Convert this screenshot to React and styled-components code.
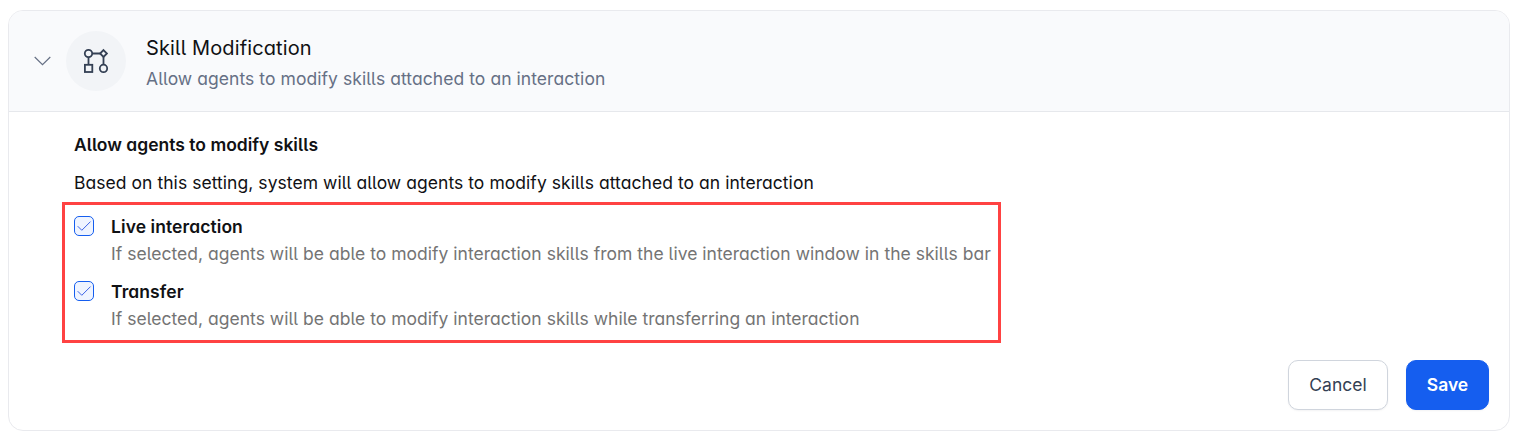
import React from "react";
import styled, { createGlobalStyle } from "styled-components";

const GlobalStyle = createGlobalStyle`
  * { box-sizing: border-box; }
  body {
    margin: 0;
    background: #fff;
    font-family: Inter, "Liberation Sans", sans-serif;
    font-feature-settings: "cv11", "cv05";
  }
`;

const Page = styled.main`
  padding: 10px 4px 0 8px;
`;

const Card = styled.section`
  width: 1502px;
  height: 421px;
  border: 1px solid #e9eaee;
  border-radius: 15px;
  background: #fff;
  overflow: hidden;
`;

const Header = styled.header`
  display: flex;
  align-items: center;
  height: 101px;
  padding-left: 25px;
  background: #f9fafc;
  border-bottom: 1px solid #e6e8ec;
`;

const Heading = styled.div`
  padding-top: 5px;
`;

const Chevron = styled.svg`
  width: 17px;
  height: 10px;
  fill: none;
  stroke: #667085;
  stroke-width: 1.2;
`;

const IconCircle = styled.div`
  display: flex;
  align-items: center;
  justify-content: center;
  width: 60px;
  height: 60px;
  margin: 0 20px 0 15px;
  border-radius: 50%;
  background: #f2f4f7;
`;

const FlowIcon = styled.svg`
  width: 26px;
  height: 26px;
  fill: none;
  stroke: #344054;
  stroke-width: 1.8;
`;

const Line = styled.div`
  font-size: ${(p) => p.$size || 17.5}px;
  line-height: ${(p) => p.$height || 28}px;
  font-weight: ${(p) => p.$weight || 370};
  letter-spacing: ${(p) => p.$track || 0}px;
  color: ${(p) => p.$color || "#101114"};
  white-space: nowrap;
`;

const Body = styled.div`
  padding: 19px 20px 0 53px;
`;

const Intro = styled.div`
  display: flex;
  flex-direction: column;
  gap: 10px;
  padding-left: 12px;
`;

const Highlight = styled.div`
  display: flex;
  flex-direction: column;
  gap: 11px;
  width: 939px;
  height: 141px;
  margin-top: 5px;
  padding: 8px 0 0 9px;
  border: 3px solid #ff4242;
`;

const Option = styled.label`
  display: flex;
  align-items: flex-start;
  gap: 17px;
`;

const Box = styled.span`
  display: flex;
  flex: none;
  width: 20px;
  height: 20px;
  margin-top: 3px;
  border: 1px solid #155eef;
  border-radius: 5px;
  background: #eff4ff;
`;

const Tick = styled.svg`
  width: 18px;
  height: 18px;
  fill: none;
  stroke: #3d63e6;
  stroke-width: 1;
`;

const Actions = styled.footer`
  display: flex;
  justify-content: flex-end;
  gap: 18px;
  margin-top: 17px;
`;

const Button = styled.button`
  width: ${(p) => (p.$primary ? 83 : 100)}px;
  height: 50px;
  padding: 0 0 2px;
  border: 1px solid ${(p) => (p.$primary ? "#155eef" : "#d0d5dd")};
  border-radius: 10px;
  background: ${(p) => (p.$primary ? "#155eef" : "#fff")};
  color: ${(p) => (p.$primary ? "#fff" : "#344054")};
  font-family: Inter, "Liberation Sans", sans-serif;
  font-feature-settings: normal;
  font-size: 17.5px;
  font-weight: ${(p) => (p.$primary ? 580 : 400)};
  box-shadow: 0 1px 2px rgba(16, 24, 40, 0.05);
`;

const options = [
  {
    title: "Live interaction",
    text: "If selected, agents will be able to modify interaction skills from the live interaction window in the skills bar",
  },
  {
    title: "Transfer",
    text: "If selected, agents will be able to modify interaction skills while transferring an interaction",
  },
];

export default function App() {
  return (
    <Page>
      <GlobalStyle />
      <Card>
        <Header>
          <Chevron viewBox="0 0 17 10">
            <path d="M0.7 1 8.5 8.6 16.3 1" />
          </Chevron>
          <IconCircle>
            <FlowIcon viewBox="0 0 26 26">
              <circle cx="5.5" cy="5.5" r="3.7" />
              <path d="M9.1 5.5h8.3M5.5 9.1v7.7M20.5 8.8v8" />
              <path d="M20.5 2.1 23.9 5.5 20.5 8.9 17.1 5.5Z" />
              <rect x="1.9" y="16.8" width="7.4" height="7.2" />
              <circle cx="20.5" cy="20.4" r="3.7" />
            </FlowIcon>
          </IconCircle>
          <Heading>
            <Line $size={20} $height={30} $weight={400} $track={0.12}>Skill Modification</Line>
            <Line $height={31} $track={0.06} $color="#667085">Allow agents to modify skills attached to an interaction</Line>
          </Heading>
        </Header>
        <Body>
          <Intro>
            <Line $weight={570}>Allow agents to modify skills</Line>
            <Line $track={0.05}>Based on this setting, system will allow agents to modify skills attached to an interaction</Line>
          </Intro>
          <Highlight>
            {options.map((o) => (
              <Option key={o.title}>
                <Box>
                  <Tick viewBox="0 0 18 18">
                    <path d="M2.7 9.2 6.8 13.3 15.5 4.6" />
                  </Tick>
                </Box>
                <div>
                  <Line $height={27} $weight={570} $track={0.08}>{o.title}</Line>
                  <Line $height={27} $track={0.02} $color="#747474">{o.text}</Line>
                </div>
              </Option>
            ))}
          </Highlight>
          <Actions>
            <Button>Cancel</Button>
            <Button $primary>Save</Button>
          </Actions>
        </Body>
      </Card>
    </Page>
  );
}
